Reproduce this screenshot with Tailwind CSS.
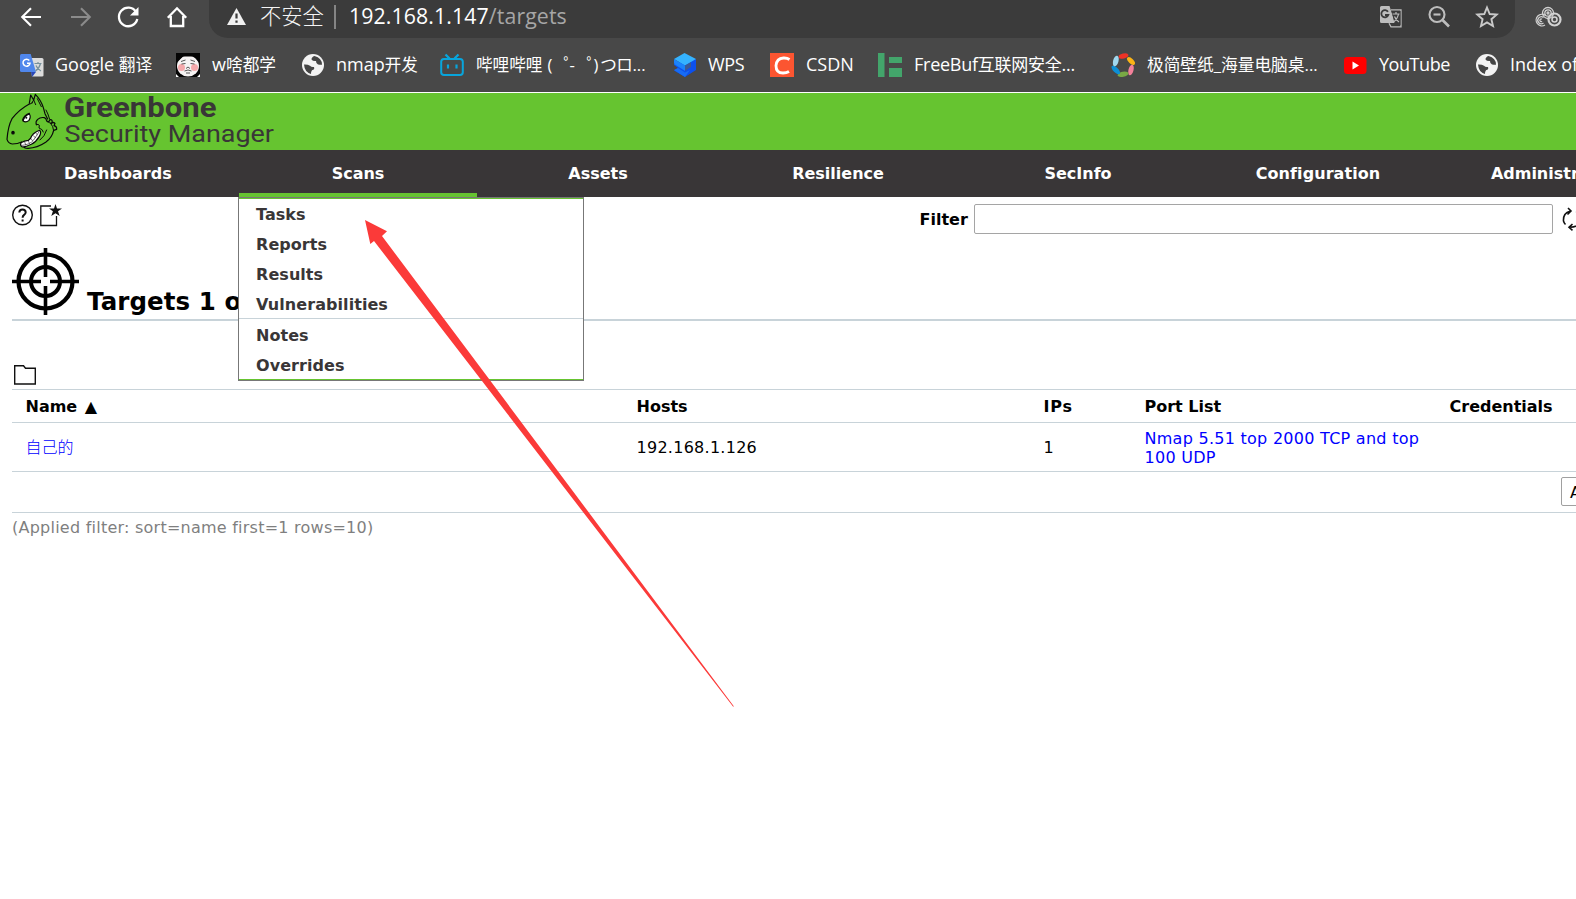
<!DOCTYPE html>
<html lang="zh-CN">
<head>
<meta charset="utf-8">
<title>Greenbone Security Manager</title>
<script src="https://cdn.jsdelivr.net/npm/@tailwindcss/browser@4"></script>
</head>
<body class="relative h-[899px] w-[1576px] overflow-hidden bg-white font-['DejaVu_Sans','Noto_Sans_CJK_SC',sans-serif] text-[16px] leading-[19px] text-black">

<!-- Browser toolbar -->
<header class="h-[93px] border-b border-white bg-[#484848] font-['Open_Sans','Noto_Sans_CJK_SC',sans-serif] text-white">
  <div class="flex h-[38px] items-start">
    <div class="flex h-[33px] w-[209px] shrink-0 items-center gap-[24.500px] pl-[19px]">
      <svg class="size-6 shrink-0" viewBox="0 0 24 24" fill="none" stroke="#fff" stroke-width="2.1"><path d="M22 12H4M12 3.2L3.2 12l8.800 8.800"/></svg>
      <svg class="size-6 shrink-0" viewBox="0 0 24 24" fill="none" stroke="#8b8b8b" stroke-width="2.100"><path d="M3 12h18M13 3.200L21.800 12 13 20.800"/></svg>
      <svg class="size-6 shrink-0" viewBox="0 0 24 24"><path d="M20 6.800A9.300 9.300 0 1 0 21.300 14" fill="none" stroke="#fff" stroke-width="2.300"/><path d="M22.500 2v8.500H14z" fill="#fff"/></svg>
      <svg class="size-6 shrink-0" viewBox="0 0 24 24" fill="none" stroke="#fff" stroke-width="2.300"><path d="M2.800 12.800L12 3.300l9.200 9.500M5.800 11v10h12.400V11"/></svg>
    </div>
    <div class="flex h-[38px] w-[1306px] shrink-0 items-start rounded-b-[19px] bg-[#3b3b3b]">
      <div class="flex h-[33px] w-full items-center pl-[18px]">
        <svg class="h-[17px] w-[19px] shrink-0" viewBox="0 0 19 17"><path d="M9.500 0L19 17H0z" fill="#f1f1f1"/><path d="M9.500 5.500v5M9.500 12.500v2.200" stroke="#3b3b3b" stroke-width="2.200"/></svg>
        <span class="ml-[14px] w-[64px] -translate-y-px text-[21.300px] leading-[30px] font-light whitespace-nowrap text-[#f4f4f4]">不安全</span>
        <span class="ml-[10px] h-6 w-[2px] bg-[#858585]"></span>
        <span class="ml-[13px] -translate-y-px text-[21.300px] leading-[30px] tracking-[0.100px] whitespace-nowrap">192.168.1.147<span class="text-[#a6a6a6]">/targets</span></span>
        <div class="ml-auto flex items-center gap-6 pr-[16px]">
          <svg class="size-6" viewBox="0 0 24 24"><path d="M2.500 1h8l5.500 17H2.500A1.500 1.500 0 0 1 1 16.500v-14A1.500 1.500 0 0 1 2.500 1z" fill="#bdbdbd"/><path d="M12 4.800h10v17H12l-2-3.500" fill="none" stroke="#bdbdbd" stroke-width="1.300"/><path d="M12.500 6h9v14h-5.500z" fill="#3b3b3b"/><path d="M9 6.800A3.600 3.600 0 1 0 9.300 10H6" fill="none" stroke="#3b3b3b" stroke-width="1.800"/><path d="M13.500 9h7M17 7v2M19.500 9q-1 5-5 8M15.500 11.500q1.500 4 4.500 5.500" fill="none" stroke="#bdbdbd" stroke-width="1.200"/></svg>
          <svg class="size-6" viewBox="0 0 24 24" fill="none" stroke="#bdbdbd" stroke-width="2.100"><circle cx="10" cy="9.500" r="7.500"/><path d="M15.500 15l6.500 6.500" stroke-width="2.600"/><path d="M6.500 9.500h7"/></svg>
          <svg class="size-6" viewBox="0 0 24 24" fill="none" stroke="#c9c9c9" stroke-width="1.900"><path d="M12 2.500l2.700 6.500 7 .6-5.300 4.600 1.600 6.900-6-3.700-6 3.700 1.600-6.900-5.300-4.600 7-.6z"/></svg>
        </div>
      </div>
    </div>
    <svg class="mt-[5px] ml-[20px] h-[24px] w-[27px] shrink-0" viewBox="0 0 27 24" fill="none" stroke="#d2d2d2" stroke-width="1.300"><circle cx="13" cy="8" r="5.500"/><circle cx="13" cy="8" r="3.200"/><circle cx="13" cy="8" r="1"/><path d="M10 20a5.800 5.800 0 1 1 .5-9.500M8.500 18a3.500 3.500 0 1 1 0-5.500M7 16.300a1.300 1.300 0 1 1 0-2"/><circle cx="19.500" cy="14.500" r="6" stroke-width="2.200"/><circle cx="19.500" cy="14.500" r="2.500" stroke-width="1.600"/></svg>
  </div>

  <nav class="flex h-[54px] items-center pl-5 text-[18px] leading-[27px] whitespace-nowrap">
    <div class="flex w-[156px] shrink-0 items-center gap-[11px]">
      <svg class="size-6 shrink-0" viewBox="0 0 24 24"><path d="M9 5h13q1.500 0 1.500 1.500v16q0 1-1.500 1H12z" fill="#dcdcdc"/><path d="M11 19h5l-4 5z" fill="#2a48b8"/><path d="M1.500 1h9.200L16 19H1.500Q0 19 0 17.500v-15Q0 1 1.500 1z" fill="#5087ec"/><path d="M9.300 7.500A3.500 3.500 0 1 0 10 10.300H7" fill="none" stroke="#fff" stroke-width="1.500"/><path d="M14.500 10.500h7M18 9v1.500M20.500 10.500q-1 4.500-5 7.500M16 12.500q1.500 4 5 5.500" fill="none" stroke="#77909b" stroke-width="1.200"/></svg>
      <span class="-translate-y-px">Google <span class="text-[16.700px]">翻译</span></span>
    </div>
    <div class="flex w-[125px] shrink-0 items-center gap-3">
      <svg class="size-6 shrink-0" viewBox="0 0 24 24"><path d="M0 0h24v24H0z" fill="#050505"/><path d="M0 24v-3l3 3zM24 24v-3l-3 3z" fill="#fff"/><ellipse cx="12" cy="13" rx="11" ry="10.500" fill="#f6f3f3"/><path d="M1.500 9Q3 2 12 1.500 21 2 22.500 9L18 3.500H7z" fill="#050505"/><circle cx="5.500" cy="14.500" r="3.500" fill="#f5a9ac"/><circle cx="18.500" cy="14.500" r="3.500" fill="#f5a9ac"/><path d="M5 8.500l4.500-1.500M14.500 7L19 8.500M5.500 11l4-.5M14.500 10.500l4 .5M10 15.500l2-1.500 2 1.500M8.500 18q3.500-2 7 0M10 20h4" fill="none" stroke="#444" stroke-width=".9"/></svg>
      <span class="-translate-y-px">w<span class="text-[16.700px]">啥都学</span></span>
    </div>
    <div class="flex w-[139px] shrink-0 items-center gap-[11px]">
      <svg class="size-6 shrink-0" viewBox="0 0 24 24"><circle cx="12" cy="12" r="11" fill="#f3f3f3"/><path d="M3 11.500q4-.2 6 1.300 1.500 1.700 4 1.200 1 2.700-2 3.300-1.200 1.500-1 3.700Q3.500 19 3 11.500zM13.500 3q-3 1-3 3.500 1.500 2 4.500 1.500 0 3 2 3.500 3 .5 4 .2Q21 5 13.500 3z" fill="#454545"/></svg>
      <span class="-translate-y-px">nmap<span class="text-[16.500px]">开发</span></span>
    </div>
    <div class="flex w-[232px] shrink-0 items-center gap-3">
      <svg class="size-6 shrink-0" viewBox="0 0 24 24" fill="none" stroke="#08a5dc" stroke-width="2"><rect x="1.200" y="6" width="21.600" height="16" rx="2.800"/><path d="M5.500 1.500l4 4M18.500 1.500l-4 4" stroke-width="2.300"/><path d="M8 11.500v4M16.500 11.500v4" stroke-width="2.200"/></svg>
      <span class="-translate-y-px text-[16.600px]">哔哩哔哩<span class="ml-[5px] inline-block w-[16px]">(</span><span class="inline-block w-[6px]">゜</span><span class="inline-block w-[17px]">-</span><span class="inline-block w-[7px]">゜</span><span>)</span><span class="ml-[2px] tracking-[-0.500px]">つロ</span>...</span>
    </div>
    <div class="flex w-[98px] shrink-0 items-center gap-3">
      <svg class="size-6 shrink-0" viewBox="0 0 24 24"><path d="M2 11l11-3 11-2v11L13 24 2 17.500l4-2.500-4-3z" fill="#0c50ee"/><path d="M2 11l4-1.500L13 14v4z" fill="#1b7dff"/><path d="M2 17l4-2 7 4.500 5-2.500-5 7z" fill="#176cf5"/><path d="M12.500 0L24 6l-11 6.500L2 6z" fill="#35b3ff"/><path d="M2 6l11 6.500V17L2 10.500z" fill="#1b83fa"/><path d="M13 12.500L19 9v5l-6 4z" fill="#3b5a95"/></svg>
      <span class="-translate-y-px tracking-[-0.300px]">WPS</span>
    </div>
    <div class="flex w-[108px] shrink-0 items-center gap-3">
      <svg class="size-6 shrink-0" viewBox="0 0 24 24"><path d="M0 0h24v24H0z" fill="#fc5531"/><path d="M19.500 6.500Q17 4.800 13.500 5 6.500 5.500 6 12.700 6 20 13 20q3.500 0 6-1.500" fill="none" stroke="#fff" stroke-width="2.800"/></svg>
      <span class="-translate-y-px">CSDN</span>
    </div>
    <div class="flex w-[233px] shrink-0 items-center gap-3">
      <svg class="size-6 shrink-0" viewBox="0 0 24 24" fill="#43a56b"><path d="M0 0h6.500v24H0zM11 4h13v6H11zM11 15h13v9H11z"/></svg>
      <span class="-translate-y-px tracking-[-0.250px]">FreeBuf<span class="text-[17px]">互联网安全</span>...</span>
    </div>
    <div class="flex w-[232px] shrink-0 items-center gap-3">
      <svg class="size-6 shrink-0" viewBox="0 0 24 24"><ellipse cx="12.500" cy="3" rx="5" ry="2.500" transform="rotate(-15 12.500 3)" fill="#ee3326"/><ellipse cx="20" cy="8" rx="5" ry="2.500" transform="rotate(45 20 8)" fill="#fbb416"/><ellipse cx="20" cy="17" rx="5.500" ry="2.500" transform="rotate(-75 20 17)" fill="#f3809a"/><ellipse cx="12" cy="21.300" rx="5.500" ry="2.500" transform="rotate(-12 12 21.300)" fill="#79a845"/><ellipse cx="4.800" cy="17" rx="5.500" ry="2.500" transform="rotate(45 4.800 17)" fill="#0c8fd6"/><ellipse cx="4.800" cy="8" rx="5.500" ry="2.700" transform="rotate(-75 4.800 8)" fill="#a0d8ef"/></svg>
      <span class="-translate-y-px text-[16.700px]">极简壁纸_海量电脑桌...</span>
    </div>
    <div class="flex w-[132px] shrink-0 items-center gap-3">
      <svg class="size-6 shrink-0" viewBox="0 0 24 24"><rect x="1" y="4" width="22.500" height="17" rx="3.500" fill="#f00"/><path d="M9.500 8.500v8l6.500-4z" fill="#fff"/></svg>
      <span class="-translate-y-px tracking-[-0.450px]">YouTube</span>
    </div>
    <div class="flex shrink-0 items-center gap-[11px]">
      <svg class="size-6 shrink-0" viewBox="0 0 24 24"><circle cx="12" cy="12" r="11" fill="#f3f3f3"/><path d="M3 11.500q4-.2 6 1.300 1.500 1.700 4 1.200 1 2.700-2 3.300-1.200 1.500-1 3.700Q3.500 19 3 11.500zM13.500 3q-3 1-3 3.500 1.500 2 4.500 1.500 0 3 2 3.500 3 .5 4 .2Q21 5 13.500 3z" fill="#454545"/></svg>
      <span class="-translate-y-px">Index of</span>
    </div>
  </nav>
</header>

<!-- Brand banner -->
<div class="flex h-[57px] bg-[#66c430] pl-[6px]">
  <svg class="h-[57px] w-[58px]" viewBox="18 9 174 171" fill="none" stroke="#0a0a0a" stroke-width="3.600" stroke-linejoin="round" stroke-linecap="round">
    <path d="M88 40L92 15l9 15 5-17q17 17 24 40l5 18 8 16M88 42Q58 58 36 86 24 108 21 148q4 12 16 14 16 0 28-6"/>
    <path d="M96 38l5-8 6 14M112 26l12 24M90 42l8-4" stroke-width="3"/>
    <path d="M109 104q-3-10 4-16 8-7 20-5 6 2 7 10 3 5 8 0 3-7 8-2 2 5-2 9 6-5 11 0l-3 7q9 2 8 11l-9 3q-5 22-24 36-25 17-53 18-13 0-14-7"/>
    <path d="M109 104q6-3 9 2l-1 8q11 3 13 12M140 92q8 8 14 8M152 100q8 9 9 22M138 60q6 10 11 28M120 150q14-10 20-30" stroke-width="3"/>
    <path d="M69 93q4-15 19-21 6 8-1 19-9 8-18 2z" fill="#fff"/>
    <path d="M68 90q3-13 20-20" stroke-width="4"/><circle cx="79" cy="83" r="1.200"/>
    <path d="M63 158q10-6 22-7 7-3 10-13 9-13 24-17 6 6-1 18-9 16-24 24-16 8-27 8-8-5-4-13z" fill="#fff"/>
    <path d="M67 166q23-2 34-16l15-23M77 164l-3-8M88 160l-3-8M98 153l-5-7M106 143l-6-6M112 134l-5-5" stroke-width="1.700"/>
    <ellipse cx="39" cy="128" rx="3.500" ry="4" fill="#0a0a0a"/>
  </svg>
  <svg class="h-[57px] w-[220px]" viewBox="64 93 220 57" fill="#393637" font-family="Roboto, sans-serif">
    <text x="64" y="116.500" font-size="27" font-weight="700" textLength="152.500" lengthAdjust="spacingAndGlyphs">Greenbone</text>
    <text x="64.500" y="141.500" font-size="24.500" font-weight="400" textLength="209.500" lengthAdjust="spacingAndGlyphs">Security Manager</text>
  </svg>
</div>

<!-- Main menu -->
<nav class="flex h-[47px] w-[1678px] bg-[#393637] text-center leading-[48px] font-bold text-white">
  <a class="w-[238px] pr-[2px] tracking-[0.080px]">Dashboards</a>
  <div class="relative w-[240px]">
    <a>Scans</a>
    <div class="absolute bottom-0 left-[1px] h-1 w-[238px] bg-[#66c430]"></div>
    <div class="absolute top-[47px] left-0 z-10 h-[184px] w-[346px] border border-[#777] bg-white text-left leading-[31px] tracking-[0.060px] text-[#393637]">
      <ul class="flex h-full flex-col border-y border-[#66c430]">
        <li class="h-[29.500px] pl-[17px]">Tasks</li>
        <li class="h-[30px] pl-[17px]">Reports</li>
        <li class="h-[30px] pl-[17px]">Results</li>
        <li class="h-[29.500px] pl-[17px]">Vulnerabilities</li>
        <li class="mt-auto h-[31px] border-t border-[#c8d3d9] pt-px pl-[17px]">Notes</li>
        <li class="h-[30px] pt-px pl-[17px]">Overrides</li>
      </ul>
    </div>
  </div>
  <a class="w-[240px]">Assets</a>
  <a class="w-[240px]">Resilience</a>
  <a class="w-[240px]">SecInfo</a>
  <a class="w-[240px] tracking-[0.080px]">Configuration</a>
  <a class="w-[240px]">Administration</a>
</nav>

<main class="ml-3">
  <div class="flex h-[50px] items-start pt-[7px]">
    <div class="flex w-[907.500px] shrink-0 gap-[6px]">
      <svg class="size-[22px]" viewBox="0 0 22 22" fill="none" stroke="#111"><circle cx="10.500" cy="11" r="9.800" stroke-width="1.400"/><path d="M7.300 8.500Q7.500 5.500 10.500 5.500t3.200 2.800q0 1.500-1.600 2.500-1.500 1-1.500 3" stroke-width="2"/><path d="M10.600 15.500v2" stroke-width="2"/></svg>
      <svg class="h-[23px] w-[23px]" viewBox="0 0 23 23"><path d="M11 2H.8v19.500h15.700V12" fill="none" stroke="#111" stroke-width="1.300"/><path d="M15.500 0l1.500 4.500h5l-4 2.800 1.700 4.700-4.200-2.800-4.200 2.800L12.900 7.300 9 4.500h5z" fill="#111"/></svg>
    </div>
    <div class="flex h-[30px] shrink-0 items-center">
      <label class="w-[54.500px] shrink-0 pt-px font-bold">Filter</label>
      <input type="text" class="h-[30px] w-[579px] shrink-0 rounded-[2px] border border-[#a5a5a5] bg-white px-2">
      <svg class="ml-[9px] h-[24px] w-[22px] shrink-0" viewBox="0 0 22 24" fill="none" stroke="#111" stroke-width="1.600"><path d="M8 4.200Q1 6 1.500 14q.5 2 2 3.500M14 4.500q6.500 2.500 5 10-2 5-10.500 5.800M6 1l3 3-3.500 3.500M10.500 17l-3.500 3.300 3.500 3"/></svg>
    </div>
  </div>

  <div class="flex h-[74px] border-b-2 border-[#c8d3d9]">
    <svg class="mt-px h-[67px] w-[67px]" viewBox="0 0 67 67" fill="none" stroke="#000"><circle cx="33.500" cy="33.500" r="27" stroke-width="4.200"/><circle cx="33.500" cy="33.500" r="14.500" stroke-width="4"/><path d="M33.500 0v29M33.500 38v29M0 33.500h29M38 33.500h29" stroke-width="3.600"/></svg>
    <h1 class="mt-[39px] ml-2 text-[24.500px] leading-[31px] font-bold tracking-[0.080px] whitespace-nowrap">Targets 1 of 1</h1>
  </div>

  <div class="h-[68px] pt-[44px] pl-[2px]">
    <svg class="h-5 w-[22px]" viewBox="0 0 22 20" fill="none" stroke="#111" stroke-width="1.400"><path d="M.7 19V.7h8.800l2 2.500h9.800V19z"/></svg>
  </div>

  <div class="w-[1640px] border-t border-[#c8d3d9]">
    <div class="flex h-[33px] items-center border-b border-[#c8d3d9] pl-[13.500px] font-bold">
      <div class="w-[611px]">Name <span class="ml-[2px]">▲</span></div><div class="w-[407px]">Hosts</div><div class="w-[101px] tracking-[0.800px]">IPs</div><div class="w-[305px]">Port List</div><div>Credentials</div>
    </div>
    <div class="flex h-[49px] items-center border-b border-[#c8d3d9] pl-[13.500px] tracking-[0.270px]">
      <div class="w-[611px] font-light tracking-normal text-[#00f]">自己的</div><div class="w-[407px]">192.168.1.126</div><div class="w-[101px]">1</div>
      <div class="w-[305px] pt-px text-[#00f]">Nmap 5.51 top 2000 TCP and top<br>100 UDP</div>
    </div>
    <div class="flex h-[41px] items-start border-b border-[#c8d3d9] pt-[5px] pl-[1549px]">
      <div class="h-[29px] w-[90px] rounded-[2px] border border-[#a0a0a0] pl-2 leading-[30px] whitespace-nowrap">Apply</div>
    </div>
  </div>
  <p class="mt-[5px] tracking-[0.240px] text-[#7f7f7f]">(Applied filter: sort=name first=1 rows=10)</p>
</main>

<!-- Annotation arrow over the page -->
<svg class="pointer-events-none absolute top-0 left-0 z-20 h-[899px] w-[1576px]" viewBox="0 0 1576 899"><path d="M365 220l22 11.300-5 4.700 352 470.500h-1L374 241l-3.700 3z" fill="#fb3a39"/></svg>
</body>
</html>
